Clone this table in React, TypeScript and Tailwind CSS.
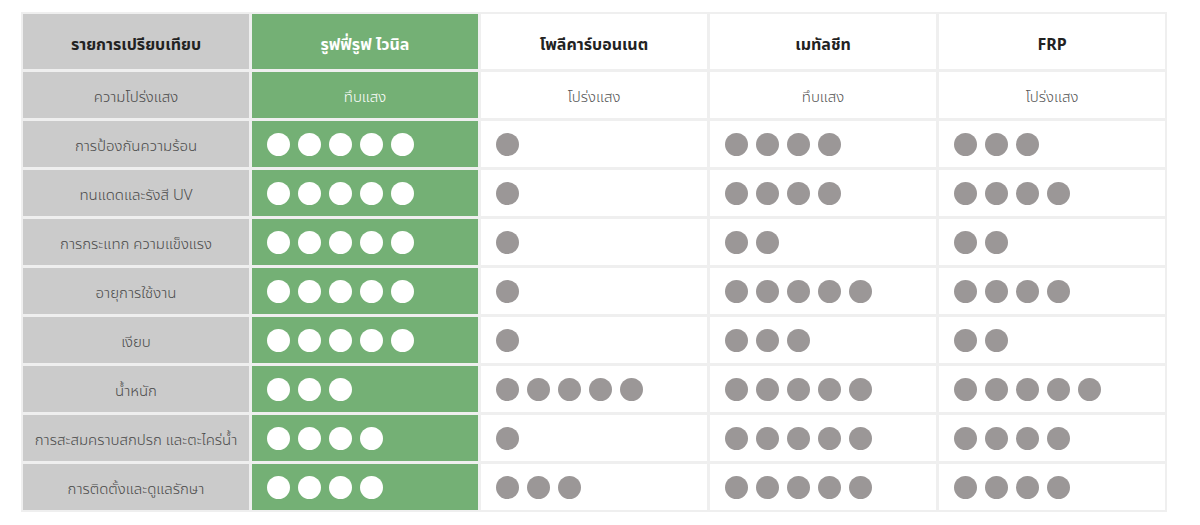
const columns = ["รูฟฟี่รูฟ ไวนิล", "โพลีคาร์บอนเนต", "เมทัลชีท", "FRP"];

const rows: { label: string; values: (number | string)[] }[] = [
  { label: "ความโปร่งแสง", values: ["ทึบแสง", "โปร่งแสง", "ทึบแสง", "โปร่งแสง"] },
  { label: "การป้องกันความร้อน", values: [5, 1, 4, 3] },
  { label: "ทนแดดและรังสี UV", values: [5, 1, 4, 4] },
  { label: "การกระแทก ความแข็งแรง", values: [5, 1, 2, 2] },
  { label: "อายุการใช้งาน", values: [5, 1, 5, 4] },
  { label: "เงียบ", values: [5, 1, 3, 2] },
  { label: "น้ำหนัก", values: [3, 5, 5, 5] },
  { label: "การสะสมคราบสกปรก และตะไคร่น้ำ", values: [4, 1, 5, 4] },
  { label: "การติดตั้งและดูแลรักษา", values: [4, 3, 5, 4] },
];

function Dots({ count, light }: { count: number; light: boolean }) {
  return (
    <div className="flex gap-2 pl-[15px]">
      {Array.from({ length: count }).map((_, i) => (
        <span
          key={i}
          className={`block w-[23px] h-[23px] rounded-full ${light ? "bg-white" : "bg-[#9b9797]"}`}
        />
      ))}
    </div>
  );
}

export default function App() {
  return (
    <div className="w-[1200px] h-[525px] bg-white pt-3 pl-[21px] font-['Noto_Sans','Noto_Sans_Thai',sans-serif]">
      <div className="w-[1146px] bg-[#efefef] p-[2px] grid grid-cols-5 gap-[3px] grid-rows-[55px_repeat(9,46px)]">
        <div className="bg-[#cbcbcb] flex items-center justify-center pt-1 text-[16px] font-bold text-[#222]">
          รายการเปรียบเทียบ
        </div>
        {columns.map((c, i) => (
          <div
            key={c}
            className={`flex items-center justify-center pt-1 text-[16px] font-bold ${
              i === 0 ? "bg-[#74b075] text-white" : "bg-white text-[#222]"
            }`}
          >
            {c}
          </div>
        ))}
        {rows.map((r) => (
          <>
            <div
              key={r.label}
              className="bg-[#cbcbcb] flex items-center justify-center pt-[2px] text-[15px] font-light text-[#4a4a4a]"
            >
              {r.label}
            </div>
            {r.values.map((v, i) => (
              <div
                key={r.label + i}
                className={`flex items-center ${
                  typeof v === "string" ? "justify-center pt-[2px]" : "justify-start"
                } text-[15px] font-light ${i === 0 ? "bg-[#74b075] text-white" : "bg-white text-[#555]"}`}
              >
                {typeof v === "string" ? v : <Dots count={v} light={i === 0} />}
              </div>
            ))}
          </>
        ))}
      </div>
    </div>
  );
}
